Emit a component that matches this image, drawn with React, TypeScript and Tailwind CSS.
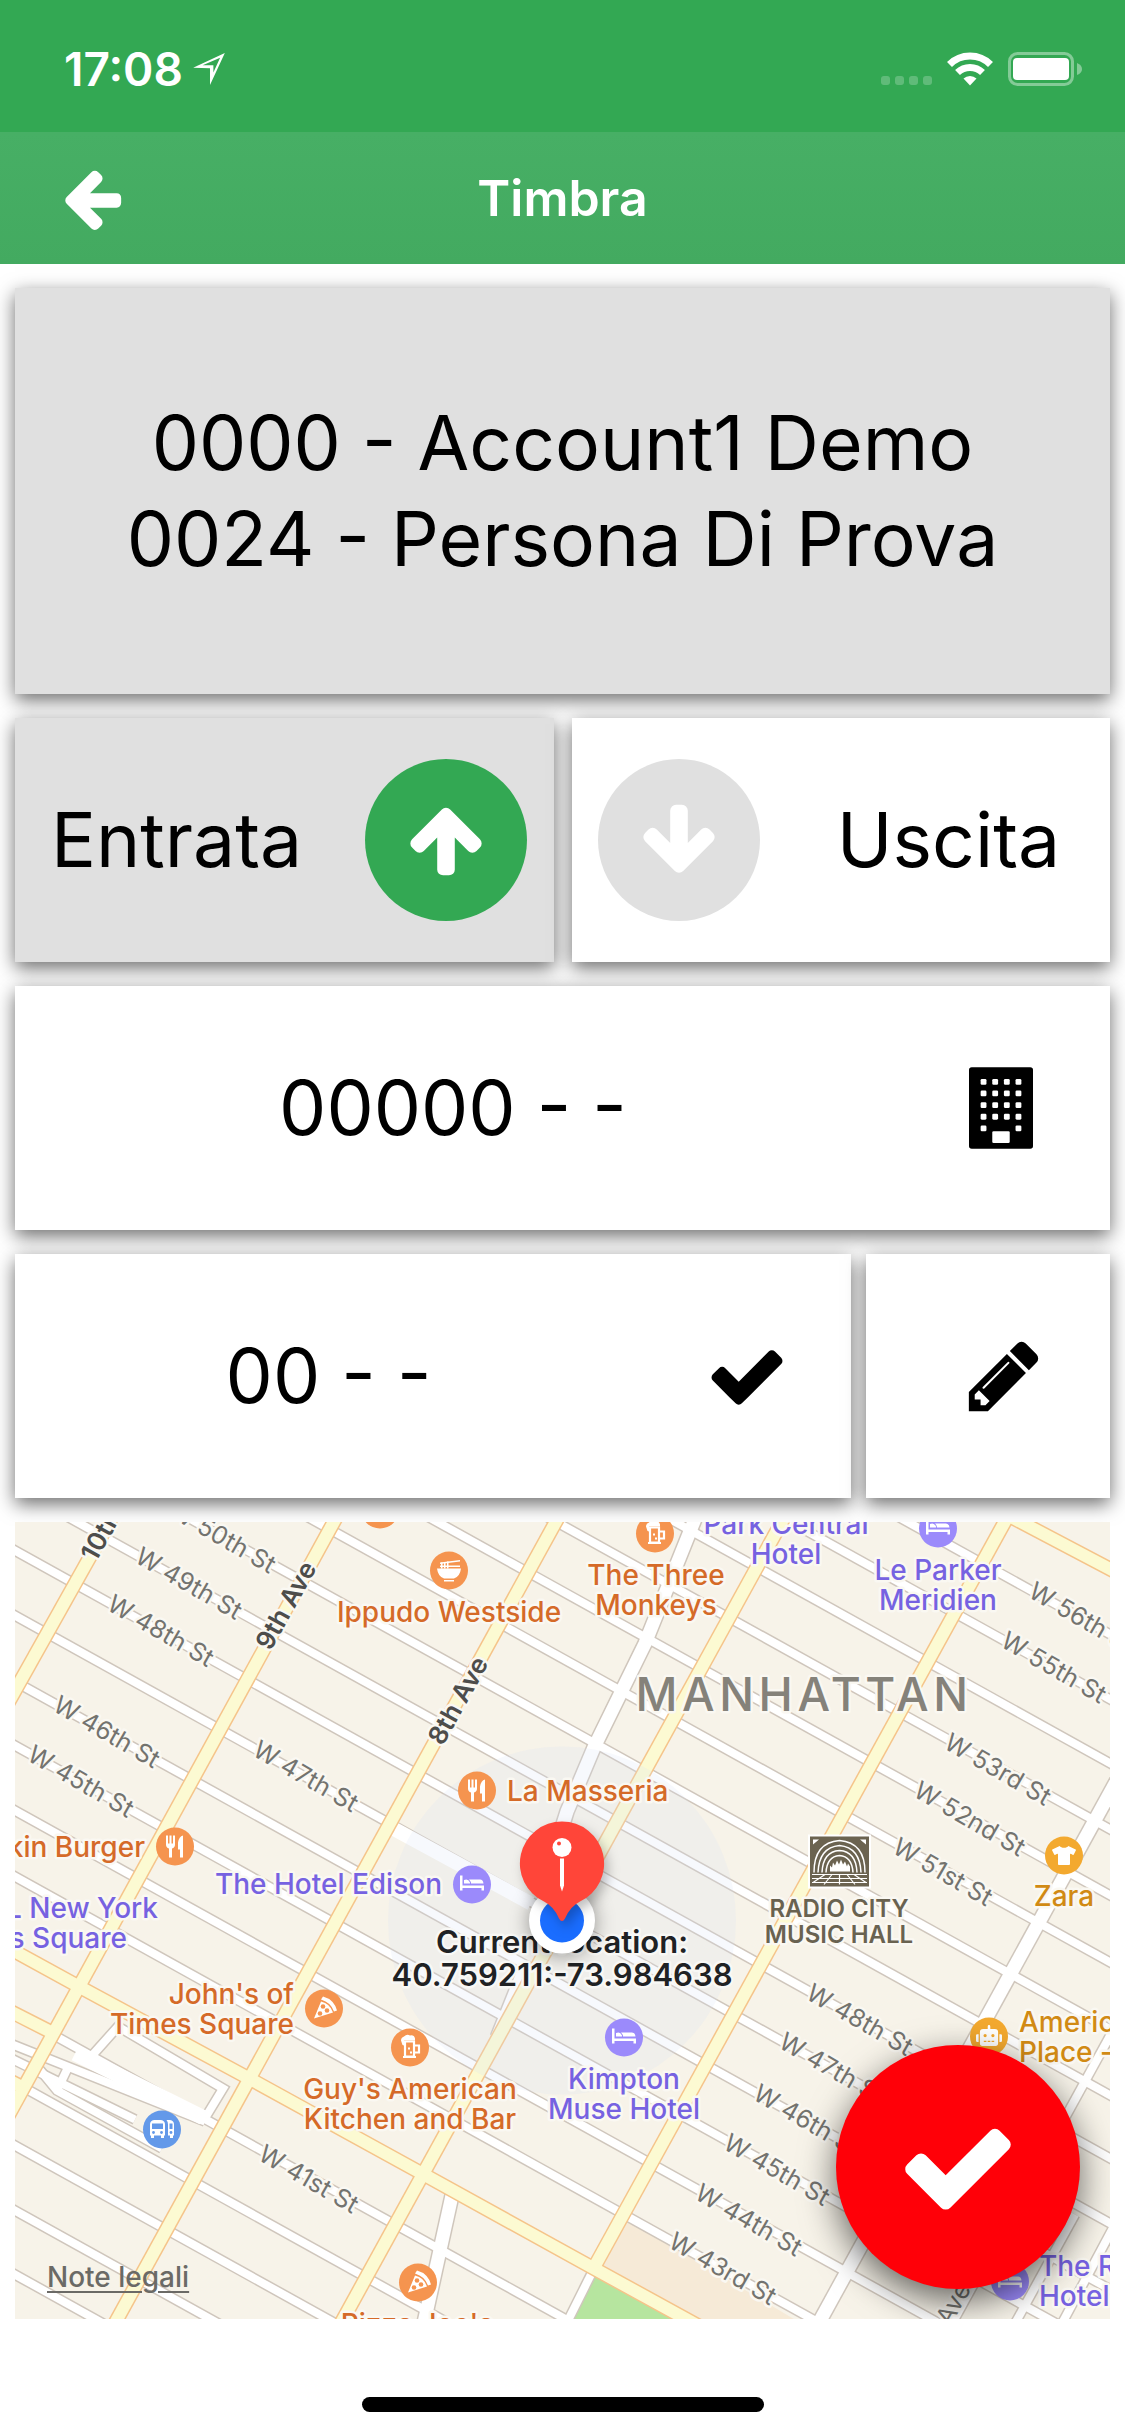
import { useState } from "react";
import type { ReactNode } from "react";
import { FaRobot, FaTshirt } from "react-icons/fa";

type Direction = "entrata" | "uscita";

const CARD = "shadow-[0_6px_18px_rgba(0,0,0,0.58)]";

const ICONS = {
  back: "M1664 896v128q0 53-32.5 90.5t-84.5 37.5h-704l293 294q38 36 38 90t-38 90l-75 76q-37 37-90 37-52 0-91-37l-651-652q-37-37-37-90 0-52 37-91l651-650q38-38 91-38 52 0 90 38l75 74q38 38 38 91t-38 91l-293 293h704q52 0 84.5 37.5t32.5 90.5z",
  up: "M1675 971q0 51-37 90l-75 75q-38 38-91 38-54 0-90-38l-294-293v704q0 52-37.5 84.5t-90.5 32.5h-128q-53 0-90.5-32.5t-37.5-84.5v-704l-294 293q-36 38-90 38t-90-38l-75-75q-38-38-38-90 0-53 38-91l651-651q35-37 90-37 54 0 91 37l651 651q37 39 37 91z",
  down: "M1675 832q0 53-37 90l-651 652q-39 37-91 37-53 0-90-37l-651-652q-38-36-38-90 0-53 38-91l74-75q39-37 91-37 53 0 90 37l294 294v-704q0-52 38-90t90-38h128q52 0 90 38t38 90v704l294-294q37-37 90-37 52 0 91 37l75 75q37 39 37 91z",
  check: "M1671 566q0 40-28 68l-724 724-136 136q-28 28-68 28t-68-28l-136-136-362-362q-28-28-28-68t28-68l136-136q28-28 68-28t68 28l294 295 656-657q28-28 68-28t68 28l136 136q28 28 28 68z",
  pencil: "M491 1536l91-91-235-235-91 91v107h128v128h107zm523-928q0-22-22-22-10 0-17 7l-542 542q-7 7-7 17 0 22 22 22 10 0 17-7l542-542q7-7 7-17zm-54-192l416 416-832 832h-416v-416zm683 96q0 53-37 90l-166 166-416-416 166-165q36-38 90-38 53 0 91 38l235 234q37 39 37 91z",
};

function Icon({ name, className }: { name: keyof typeof ICONS; className: string }) {
  return (
    <svg viewBox="0 0 1792 1792" fill="currentColor" aria-hidden="true" className={className}>
      <path d={ICONS[name]} />
    </svg>
  );
}

function BuildingIcon() {
  return (
    <svg viewBox="0 0 1408 1792" aria-hidden="true" className="h-[82px] w-16">
      <rect width="1408" height="1792" rx="60" />
      <g fill="#fff">
        {[256, 512, 768, 1024, 1280].map((y) =>
          [256, 512, 768, 1024]
            .filter((x) => y < 1280 || x === 256 || x === 1024)
            .map((x) => <rect key={`${x}-${y}`} x={x} y={y} width="128" height="128" rx="28" />)
        )}
        <rect x="512" y="1408" width="384" height="256" rx="28" />
      </g>
    </svg>
  );
}

function StatusBar() {
  return (
    <div className="flex h-[132px] items-center justify-between bg-[#33a853] pr-[43px] pl-16 text-white">
      <div className="flex items-center gap-[10px] pt-[6px]">
        <span className="text-[46px] leading-[52px] font-semibold">17:08</span>
        <svg viewBox="0 0 94 95" className="size-8" fill="currentColor" fillRule="evenodd">
          <path d="M0 44L94 0 50 95V45zM28 36H60V58L80 14z" />
        </svg>
      </div>
      <div className="flex items-center pt-[6px]">
        <svg viewBox="0 0 52 34" className="mr-[14px] h-[34px] w-[52px]" fill="#fff" opacity="0.22">
          {[0, 14, 28, 42].map((x) => (
            <rect key={x} x={x} y="24" width="9" height="9" rx="3" />
          ))}
        </svg>
        <svg viewBox="0 0 46 34" className="mr-[15px] h-[34px] w-[46px]" fill="none" stroke="#fff">
          <path d="M2.500 12.500A29 29 0 0 1 43.500 12.500" strokeWidth="7" />
          <path d="M10.500 20.500A18 18 0 0 1 35.500 20.500" strokeWidth="7" />
          <path d="M23 33.500L16.500 26.500A9.500 9.500 0 0 1 29.500 26.500Z" fill="#fff" stroke="none" />
        </svg>
        <svg viewBox="0 0 74 34" className="h-[34px] w-[74px]" fill="#fff">
          <rect x="1.500" y="1.500" width="63" height="31" rx="8" fill="none" stroke="#fff" strokeWidth="3" opacity="0.4" />
          <rect x="5" y="6" width="56" height="22" rx="4" />
          <path d="M69 11q5 2 5 6t-5 6z" opacity="0.4" />
        </svg>
      </div>
    </div>
  );
}

// Every street runs parallel: y = c + 0.555x
const STREETS = [-495, -430, -366, -300, -234, -167, -100, -34, 29, 94, 160, 224, 289, 355, 492, 561, 624, 689, 753];
const SLOPE = 0.555;

const STREET_NAMES: [string, number, number][] = [
  ["W 50th St", 208, -100],
  ["W 49th St", 174, -35],
  ["W 48th St", 146, 28],
  ["W 46th St", 92, 159],
  ["W 45th St", 66, 223],
  ["W 47th St", 291, 93],
  ["W 56th St", 1067, -496],
  ["W 55th St", 1039, -431],
  ["W 53rd St", 983, -298],
  ["W 52nd St", 955, -233],
  ["W 51st St", 928, -165],
  ["W 48th St", 845, 29],
  ["W 47th St", 817, 93],
  ["W 46th St", 792, 159],
  ["W 45th St", 762, 225],
  ["W 44th St", 734, 291],
  ["W 43rd St", 708, 354],
  ["W 41st St", 294, 494],
];

const AVENUES = [
  "M106 -20L-15 196",
  "M330 -20L-11 602",
  "M552 -20L91 818",
  "M778 -20L317 818",
  "M1001 -20L579 746",
  "M-20 419L62 464 236 558 407 652 579 747 712 820",
  "M-20 482L37 511",
  "M-10 557L10 567",
  "M980 -13L1115 58",
];

const WHITE_AVENUES = [
  "M685 -15L630 122 579 226 552 290 530 360",
  "M437 674L406 815",
  "M1110 244L798 812",
];

const NARROW_STREETS = [
  "M579 747L545 815",
  "M1110 487L930 815",
  "M1060 693L1000 802",
  "M1110 684L1040 815",
  "M510 440L480 515",
  "M78 533L103 505 208 567 188 600",
  "M23 546L42 569 147 627",
  "M42 569L53 546",
  "M-10 520L190 600",
  "M-10 534L120 598",
];

type Kind = "food" | "hotel" | "shop" | "music" | "bus";

const FILL: Record<Kind, string> = {
  food: "#f5944f",
  hotel: "#9b8afb",
  shop: "#f3a92f",
  music: "#6b6350",
  bus: "#6399e9",
};

const TEXT: Record<Kind, string> = {
  food: "#d56a28",
  hotel: "#7662e1",
  shop: "#d18a14",
  music: "#696250",
  bus: "#6399e9",
};

// Glyphs are drawn round 0,0 inside a badge of radius 19
const GLYPHS: Record<string, ReactNode> = {
  fork: (
    <g fill="#fff">
      <path d="M-9-11h2v8h1.500v-8h2v8H-2v-8H0v9q0 3-3 4V11h-3V2q-3-1-3-4z" />
      <path d="M8-11V11H5V3H3V-4q1-6 5-7z" />
    </g>
  ),
  bed: (
    <g fill="#fff">
      <path d="M-12-9h2.500V1H12V6H9.500V3.500H-9.500V6H-12z" />
      <path d="M-8-4.500q4-2 6 2.500v1h-6zM-3-5H8q3 0 3.500 4H-1q0-2-2-4z" />
    </g>
  ),
  beer: (
    <g>
      <path d="M-9-7q0-3 3-4 3-3 6-1 4-1 5 3v2h-11v5q-2 0-2-2z" fill="#fff" />
      <path d="M-5-6H4V9H-5zM4-2H9V5H4M-7 9.500H6" fill="none" stroke="#fff" strokeWidth="2.200" />
      <path d="M-2 0h2v2h-2zM0 4h2v2H0z" fill="#fff" />
    </g>
  ),
  pizza: (
    <g>
      <path d="M-1-12Q10-9 13 2L10 3Q7-6-3-9z" fill="#fff" />
      <path d="M-3-7Q6-5 9 4L-10 10z" fill="#fff" />
      <circle cx="-1" cy="-2" r="2.300" fill="#f5944f" />
      <circle cx="3" cy="2" r="2.300" fill="#f5944f" />
      <circle cx="-4" cy="5" r="2.300" fill="#f5944f" />
    </g>
  ),
  ramen: (
    <g fill="#fff">
      <path d="M-12-2H12Q11 6 5 8H-5Q-11 6-12-2zM-5 9.500H5V11H-5zM-9-8L11-10.500V-9L-9-6.500zM-9-5H11v1.500H-9z" />
      <path d="M-8-8h1.500v6H-8zM-5-8h1.500v6H-5zM-2-9h1.500v7H-2z" />
    </g>
  ),
  bus: (
    <g>
      <path d="M-12-5q0-4 4-4.500h7q4 .5 4 4.500V6H2V8.500H-1V6h-7v2.500h-3V6h-1z" fill="#fff" />
      <path d="M4.500-9.500H8q4 .5 4 4.500V6h-1V8.500H8V6H6V-5q0-3-1.500-4.500z" fill="#fff" />
      <path d="M-10-6H1v5.500h-11zM7.500-6H10.500v5.500H7.500z" fill="#6399e9" />
      <circle cx="-8.500" cy="3" r="1.400" fill="#6399e9" />
      <circle cx="-.5" cy="3" r="1.400" fill="#6399e9" />
      <circle cx="9" cy="3" r="1.400" fill="#6399e9" />
    </g>
  ),
  shirt: <FaTshirt x={-12} y={-12} size={24} color="#fff" />,
  robot: <FaRobot x={-13} y={-14} size={26} color="#fff" />,
};

const POIS: { kind: Kind; glyph: string; x: number; y: number }[] = [
  { kind: "food", glyph: "fork", x: 365, y: -12 },
  { kind: "food", glyph: "ramen", x: 434, y: 49 },
  { kind: "food", glyph: "fork", x: 462, y: 269 },
  { kind: "food", glyph: "fork", x: 160, y: 325 },
  { kind: "hotel", glyph: "bed", x: 457, y: 363 },
  { kind: "food", glyph: "beer", x: 640, y: 12 },
  { kind: "hotel", glyph: "bed", x: 923, y: 7 },
  { kind: "shop", glyph: "shirt", x: 1049, y: 334 },
  { kind: "food", glyph: "pizza", x: 309, y: 487 },
  { kind: "food", glyph: "beer", x: 395, y: 526 },
  { kind: "bus", glyph: "bus", x: 147, y: 608 },
  { kind: "food", glyph: "pizza", x: 403, y: 761 },
  { kind: "hotel", glyph: "bed", x: 609, y: 516 },
  { kind: "shop", glyph: "robot", x: 974, y: 515 },
  { kind: "hotel", glyph: "bed", x: 995, y: 760 },
];

const LABELS: { kind: Kind; x: number; y: number; lines: string[]; anchor?: "start" | "end" }[] = [
  { kind: "food", x: 434, y: 100, lines: ["Ippudo Westside"] },
  { kind: "food", x: 641, y: 63, lines: ["The Three", "Monkeys"] },
  { kind: "food", x: 492, y: 279, lines: ["La Masseria"], anchor: "start" },
  { kind: "food", x: 130, y: 335, lines: ["kin Burger"], anchor: "end" },
  { kind: "hotel", x: 427, y: 372, lines: ["The Hotel Edison"], anchor: "end" },
  { kind: "hotel", x: 143, y: 396, lines: ["L New York"], anchor: "end" },
  { kind: "hotel", x: 112, y: 426, lines: ["s Square"], anchor: "end" },
  { kind: "hotel", x: 771, y: 12, lines: ["Park Central", "Hotel"] },
  { kind: "hotel", x: 923, y: 58, lines: ["Le Parker", "Meridien"] },
  { kind: "shop", x: 1049, y: 384, lines: ["Zara"] },
  { kind: "food", x: 279, y: 482, lines: ["John's of", "Times Square"], anchor: "end" },
  { kind: "food", x: 395, y: 577, lines: ["Guy's American", "Kitchen and Bar"] },
  { kind: "food", x: 402, y: 812, lines: ["Pizza Joe's"] },
  { kind: "hotel", x: 609, y: 567, lines: ["Kimpton", "Muse Hotel"] },
  { kind: "shop", x: 1004, y: 510, lines: ["American", "Place - "], anchor: "start" },
  { kind: "hotel", x: 1024, y: 754, lines: ["The R", "Hotel"], anchor: "start" },
];

const HALO = "[paint-order:stroke] [stroke-linejoin:round]";

function CityMap() {
  return (
    <svg
      viewBox="0 0 1095 798"
      preserveAspectRatio="xMidYMid slice"
      className="absolute inset-0 size-full"
      role="img"
      aria-label="Mappa"
    >
      <rect x="-500" y="-500" width="2095" height="1798" fill="#f7f3e9" />
      <path d="M610 697L583 747 675 800H783z" fill="#f6ead7" />
      <path d="M578 750L550 810H680z" fill="#b6e59f" />

      <g fill="none" stroke="#cfc6bc">
        {STREETS.map((c) => (
          <path key={c} d={`M-20 ${c - 11}L1115 ${c + 1115 * SLOPE}`} strokeWidth="11" clipPath={c > 400 ? "url(#west)" : undefined} />
        ))}
        {NARROW_STREETS.map((d) => <path key={d} d={d} strokeWidth="11" />)}
        {WHITE_AVENUES.map((d) => <path key={d} d={d} strokeWidth="16" />)}
      </g>
      <g fill="none" stroke="#fff">
        {STREETS.map((c) => (
          <path key={c} d={`M-20 ${c - 11}L1115 ${c + 1115 * SLOPE}`} strokeWidth="8" clipPath={c > 400 ? "url(#west)" : undefined} />
        ))}
        {NARROW_STREETS.map((d) => <path key={d} d={d} strokeWidth="8" />)}
        {WHITE_AVENUES.map((d) => <path key={d} d={d} strokeWidth="13" />)}
        <path d="M380 308L516 382" strokeWidth="14" />
        <path d="M60 532L188 596" strokeWidth="15" />
      </g>
      <g fill="none" stroke="#f5c48a" strokeWidth="15">
        {AVENUES.map((d) => <path key={d} d={d} />)}
      </g>
      <g fill="none" stroke="#fcfad2" strokeWidth="12">
        {AVENUES.map((d) => <path key={d} d={d} />)}
      </g>
      {/* the park and the avenue beside it end the southern streets */}
      <clipPath id="west">
        <path d="M-20 400H578L556 800H-20z" />
      </clipPath>

      <circle cx="547" cy="399" r="174" fill="#d5e0f5" opacity="0.2" />

      <g textAnchor="middle" stroke="#faf8f2" strokeWidth="5" className={HALO}>
        <g fontSize="25" fill="#73736f">
          {STREET_NAMES.map(([name, x, c]) => (
            <text key={`${name}${x}`} transform={`translate(${x} ${c + x * SLOPE}) rotate(30)`} y="9">
              {name}
            </text>
          ))}
        </g>
        <g fontSize="26" fontWeight="600" fill="#4d4d4b">
          <text transform="translate(99 -10) rotate(-61)" y="9">10th Ave</text>
          <text transform="translate(271 84) rotate(-61)" y="9">9th Ave</text>
          <text transform="translate(443 179) rotate(-61)" y="9">8th Ave</text>
        </g>
        <text transform="translate(938 782) rotate(-61)" y="9" fontSize="25" fill="#73736f">Ave</text>
        <text x="789" y="189" fontSize="46" fontWeight="500" fill="#85827a" className="tracking-widest">
          MANHATTAN
        </text>
        <g fontSize="24" fontWeight="600" fill={TEXT.music}>
          <text x="824" y="395">RADIO CITY</text>
          <text x="824" y="421">MUSIC HALL</text>
        </g>
      </g>

      <g fontSize="28" fontWeight="500" stroke="#faf8f2" strokeWidth="5" className={HALO}>
        {LABELS.map(({ kind, x, y, lines, anchor }) =>
          lines.map((line, i) => (
            <text key={line} x={x} y={y + i * 30} fill={TEXT[kind]} textAnchor={anchor ?? "middle"}>
              {line}
            </text>
          ))
        )}
      </g>

      {POIS.map(({ kind, glyph, x, y }) => (
        <g key={`${x}-${y}`} transform={`translate(${x} ${y})`}>
          <circle r="19" fill={FILL[kind]} />
          {GLYPHS[glyph]}
        </g>
      ))}

      <g transform="translate(793 313)" fill="none" stroke="#fff">
        <rect width="63" height="54" fill="#fff" stroke="none" />
        <rect x="2" y="2" width="59" height="50" fill={FILL.music} stroke="none" />
        <path d="M5 5h6L5 10zM58 5h-6l6 5z" fill="#fff" stroke="none" />
        <path d="M6 38Q6 8 31.500 6 57 8 57 38M10 38Q11 13 31.500 11 52 13 53 38M14 38Q15 17 31.500 16 48 17 49 38M18 38Q19 22 31.500 21 44 22 45 38" strokeWidth="1.500" />
        <path d="M22 37V31l2 2 1-5 2 3 2-5 2 4 2-5 2 5 2-3 2 5 1-3 2 3v5z" fill="#fff" stroke="none" />
        <path d="M4 40H59M4 44H59M4 48H59M31.500 40V50M24 40L16 50M39 40L47 50M17 40L5 48M46 40L58 48" strokeWidth="1.200" />
      </g>

      <g textAnchor="middle" fontSize="31" fontWeight="600" fill="#1f2224" stroke="#f8f8f5" strokeWidth="5" className={HALO}>
        <text x="547" y="431">Current location:</text>
        <text x="547" y="464">40.759211:-73.984638</text>
      </g>

      <g className="drop-shadow-[0_2px_10px_rgba(0,0,0,0.4)]">
        <circle cx="547" cy="399" r="33" fill="#fff" />
      </g>
      <circle cx="547" cy="399" r="22" fill="#1a6dff" />
      <g className="drop-shadow-[4px_6px_6px_rgba(0,0,0,0.25)]">
        <path d="M547 300a42 42 0 0 1 18 80q-10 5-15 17-3 5-6 0-5-12-15-17a42 42 0 0 1 18-80z" fill="#ff4539" />
      </g>
      <circle cx="547" cy="326" r="9.500" fill="#fff" />
      <circle cx="544" cy="322" r="2" fill="#ff4539" />
      <path d="M545 337h4v27l-2 6-2-6z" fill="#fff" />
    </svg>
  );
}

export default function App() {
  const [direction, setDirection] = useState<Direction>("entrata");
  const entrata = direction === "entrata";

  return (
    <div className="flex min-h-screen flex-col bg-white font-['Inter',sans-serif] text-black">
      <StatusBar />
      <header className="grid h-[132px] grid-cols-[1fr_auto_1fr] items-center bg-linear-to-b from-[#47af65] to-[#43aa60] px-[58px] text-white">
        <button type="button" aria-label="Indietro" className="justify-self-start">
          <Icon name="back" className="size-[68px]" />
        </button>
        <h1 className="text-[50px] leading-[60px] font-semibold">Timbra</h1>
      </header>

      <main className="flex flex-1 flex-col gap-6 px-[15px] pt-6 text-[75px] leading-[96px]">
        <section className={`flex h-[406px] flex-col items-center justify-center bg-[#e0e0e0] ${CARD}`}>
          <p>0000 - Account1 Demo</p>
          <p>0024 - Persona Di Prova</p>
        </section>

        <div className="grid grid-cols-2 gap-[18px]">
          <button
            type="button"
            aria-pressed={entrata}
            onClick={() => setDirection("entrata")}
            className={`grid h-[244px] grid-cols-[3fr_2fr] items-center justify-items-center ${CARD} ${entrata ? "bg-[#e0e0e0]" : "bg-white"}`}
          >
            <span>Entrata</span>
            <span className={`flex size-[162px] items-center justify-center rounded-full text-white ${entrata ? "bg-[#33a853]" : "bg-[#e0e0e0]"}`}>
              <Icon name="up" className="size-[82px]" />
            </span>
          </button>
          <button
            type="button"
            aria-pressed={!entrata}
            onClick={() => setDirection("uscita")}
            className={`grid h-[244px] grid-cols-[2fr_3fr] items-center justify-items-center ${CARD} ${entrata ? "bg-white" : "bg-[#e0e0e0]"}`}
          >
            <span className={`flex size-[162px] items-center justify-center rounded-full text-white ${entrata ? "bg-[#e0e0e0]" : "bg-[#33a853]"}`}>
              <Icon name="down" className="size-[82px]" />
            </span>
            <span>Uscita</span>
          </button>
        </div>

        <button type="button" className={`grid h-[244px] grid-cols-[4fr_1fr] items-center justify-items-center bg-white ${CARD}`}>
          <span>00000 - -</span>
          <BuildingIcon />
        </button>

        <div className="flex gap-[15px]">
          <button type="button" className={`grid h-[244px] flex-1 grid-cols-[3fr_1fr] items-center justify-items-center bg-white ${CARD}`}>
            <span>00 - -</span>
            <Icon name="check" className="size-[82px]" />
          </button>
          <button type="button" aria-label="Modifica" className={`flex h-[244px] w-[244px] items-center justify-center bg-white pl-8 ${CARD}`}>
            <Icon name="pencil" className="size-[82px]" />
          </button>
        </div>

        <section className="relative min-h-[600px] flex-1 overflow-hidden">
          <CityMap />
          <a href="#note-legali" className="absolute bottom-[26px] left-8 text-[28px] leading-8 font-medium text-[#6b6a66] underline underline-offset-4">
            Note legali
          </a>
          <button
            type="button"
            aria-label="Conferma timbratura"
            className="absolute right-[30px] bottom-[30px] flex size-[244px] items-center justify-center rounded-full bg-[#ff0008] text-white shadow-[0_12px_36px_rgba(0,0,0,0.6)]"
          >
            <Icon name="check" className="size-[122px]" />
          </button>
        </section>
      </main>

      <footer className="flex h-[117px] items-end justify-center pb-6">
        <div className="h-[15px] w-[402px] rounded-full bg-black" />
      </footer>
    </div>
  );
}
